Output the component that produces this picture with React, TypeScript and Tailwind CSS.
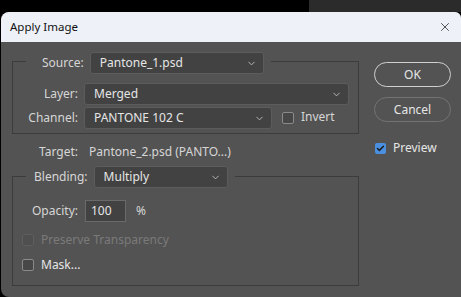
import { Check, ChevronDown, X } from "lucide-react"

function Select({ value, width }: { value: string; width: string }) {
  return (
    <div
      className={`flex h-[22px] ${width} items-center justify-between rounded-[3px] border border-[#5c5c5c] bg-[#424242] pl-[9px] pr-[6px] text-[#e6e6e6]`}
    >
      <span>{value}</span>
      <ChevronDown size={11} strokeWidth={2} className="text-[#bdbdbd]" />
    </div>
  )
}

function Box({ checked = false, disabled = false }: { checked?: boolean; disabled?: boolean }) {
  if (checked) {
    return (
      <div className="flex h-[11px] w-[11px] items-center justify-center rounded-[2px] bg-[#4a8fe0]">
        <Check size={9} strokeWidth={4} className="text-[#1d1d1d]" />
      </div>
    )
  }
  return (
    <div
      className={`h-[12px] w-[12px] rounded-[2px] border ${
        disabled ? "border-[#5e5e5e] bg-[#4f4f4f]" : "border-[#8a8a8a] bg-[#474747]"
      }`}
    />
  )
}

export default function App() {
  return (
    <div
      className="h-[297px] w-[461px] overflow-hidden bg-black text-[12px] leading-none"
      style={{ fontFamily: '"Noto Sans", "Open Sans", sans-serif' }}
    >
      <div className="flex h-[12px]">
        <div className="w-[309px] bg-black" />
        <div className="flex-1 bg-[#2b2b2b]" />
      </div>

      <div className="ml-[1px] h-[285px] overflow-hidden rounded-tl-[8px] rounded-tr-[6px] rounded-bl-[8px] bg-[#535353]">
        {/* title bar */}
        <div className="flex h-[30px] items-center justify-between bg-[#eef2f8] pl-[9px] pr-[9px] text-[11.5px] text-[#111]">
          <span>Apply Image</span>
          <X size={14} strokeWidth={1.3} className="text-[#222]" />
        </div>

        <div className="flex">
          {/* left column */}
          <div className="w-[358px] pl-[11px] pt-[19px] text-[#d6d6d6]">
            {/* group 1 */}
            <div className="border border-[#3c3c3c] pb-[4px]">
              <div className="-mt-[10px] ml-[13px] flex w-fit items-center gap-[6px] bg-[#535353] pl-[16px] pr-[7px]">
                <span>Source:</span>
                <Select value="Pantone_1.psd" width="w-[174px]" />
              </div>
              <div className="mt-[9px] flex items-center">
                <span className="w-[65px] text-right">Layer:</span>
                <div className="ml-[6px]">
                  <Select value="Merged" width="w-[265px]" />
                </div>
              </div>
              <div className="mt-[2px] flex items-center">
                <span className="w-[65px] text-right">Channel:</span>
                <div className="ml-[6px]">
                  <Select value="PANTONE 102 C" width="w-[188px]" />
                </div>
                <div className="ml-[10px] flex items-center gap-[7px]">
                  <Box />
                  <span className="-mt-[3px]">Invert</span>
                </div>
              </div>
            </div>

            {/* target */}
            <div className="mb-[16px] mt-[9px] flex h-[17px] items-center">
              <span className="w-[66px] text-right">Target:</span>
              <span className="ml-[11px]">Pantone_2.psd (PANTO...)</span>
            </div>

            {/* group 2 */}
            <div className="h-[110px] border border-[#3c3c3c]">
              <div className="-mt-[11px] ml-[13px] flex w-fit items-center gap-[6px] bg-[#535353] pl-[8px] pr-[7px]">
                <span>Blending:</span>
                <Select value="Multiply" width="w-[134px]" />
              </div>
              <div className="mt-[12px] flex items-center">
                <span className="w-[65px] text-right">Opacity:</span>
                <div className="ml-[7px] flex h-[22px] w-[41px] items-center border border-[#6a6a6a] bg-[#424242] pl-[5px] text-[#e6e6e6]">
                  100
                </div>
                <span className="ml-[10px]">%</span>
              </div>
              <div className="ml-[9px] mt-[11px] flex h-[14px] items-center gap-[7px] text-[#7a7a7a]">
                <Box disabled />
                <span>Preserve Transparency</span>
              </div>
              <div className="ml-[9px] mt-[11px] flex h-[14px] items-center gap-[7px] text-[#e6e6e6]">
                <Box />
                <span>Mask...</span>
              </div>
            </div>
          </div>

          {/* right column */}
          <div className="ml-[15px] flex flex-col pt-[20px] text-[#e6e6e6]">
            <div className="flex h-[25px] w-[77px] items-center justify-center rounded-full border-[1.5px] border-[#cfcfcf]">
              OK
            </div>
            <div className="mt-[10px] flex h-[25px] w-[77px] items-center justify-center rounded-full border border-[#737373]">
              Cancel
            </div>
            <div className="ml-[1px] mt-[20px] flex items-center gap-[7px]">
              <Box checked />
              <span>Preview</span>
            </div>
          </div>
        </div>
      </div>
    </div>
  )
}
